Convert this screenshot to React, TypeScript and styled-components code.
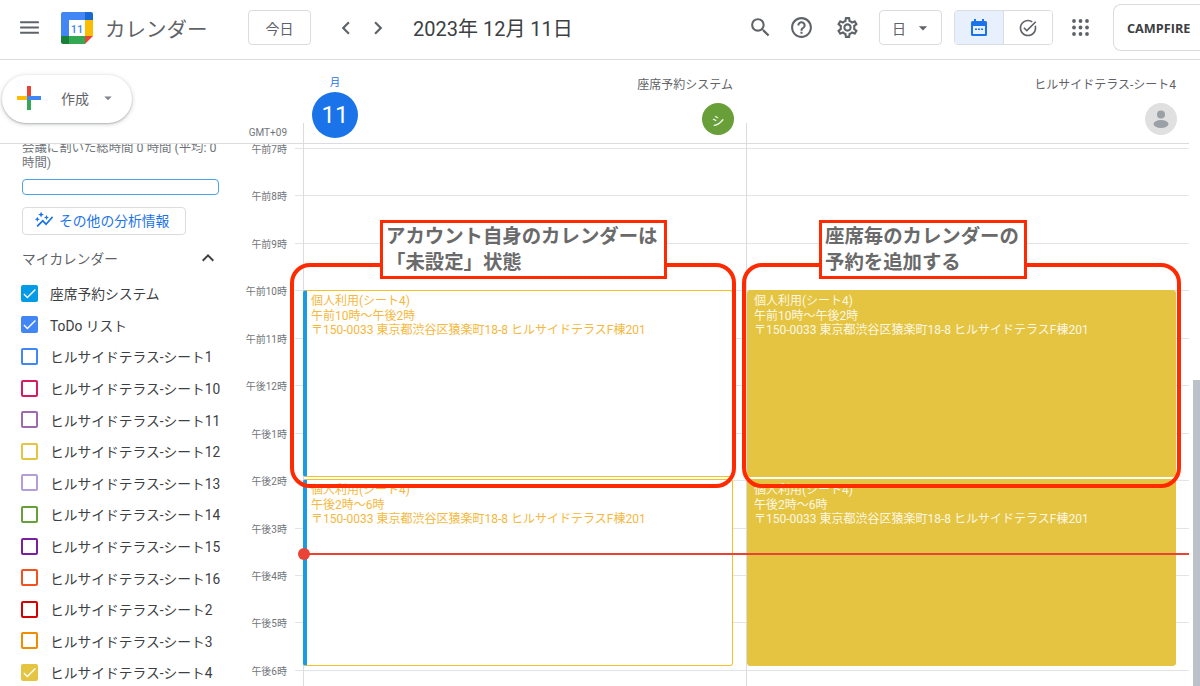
import React from "react";
import styled, { createGlobalStyle } from "styled-components";
import {
  MdArrowDropDown,
  MdAutoGraph,
  MdChevronLeft,
  MdChevronRight,
  MdCheck,
  MdHelpOutline,
  MdKeyboardArrowUp,
  MdMenu,
  MdOutlineSettings,
  MdOutlineTaskAlt,
  MdSearch,
} from "react-icons/md";

const HOUR = 47.45;

const GlobalStyle = createGlobalStyle`
  html, body {
    margin: 0;
    height: 100%;
    overflow: hidden;
    background: #fff;
    font-family: Roboto, "Noto Sans CJK JP", sans-serif;
    color: #3c4043;
  }
  * { box-sizing: border-box; }
`;

const Page = styled.div`
  position: relative;
  width: 1200px;
  height: 686px;
  overflow: hidden;
  display: flex;
  flex-direction: column;
`;

/* header */
const Header = styled.header`
  flex: none;
  height: 60px;
  padding-bottom: 4px;
  display: flex;
  align-items: center;
  border-bottom: 1px solid #dadce0;
  color: #5f6368;
`;

const MenuIcon = styled(MdMenu)`
  margin-left: 17px;
  font-size: 25px;
  flex: none;
`;

const LogoWrap = styled.div`
  margin-left: 19px;
  width: 32px;
  height: 32px;
  flex: none;
`;

const AppTitle = styled.div`
  margin-left: 12px;
  width: 143px;
  font-size: 20.5px;
  color: #5f6368;
  white-space: nowrap;
`;

const OutlineButton = styled.div<{ $width: number; $inset?: number }>`
  flex: none;
  width: ${(p) => p.$width}px;
  height: 35px;
  padding-left: ${(p) => p.$inset ?? 0}px;
  display: flex;
  align-items: center;
  justify-content: center;
  border: 1px solid #dadce0;
  border-radius: 4px;
  font-size: 14px;
  color: #5f6368;
`;

const NavArrows = styled.div`
  flex: none;
  margin-left: 22px;
  width: 58px;
  display: flex;
  justify-content: space-between;
  font-size: 26px;
  color: #5f6368;
`;

const DateText = styled.div`
  margin-left: 22px;
  font-size: 20px;
  color: #3c4043;
  white-space: nowrap;
`;

const Spacer = styled.div`
  flex: 1;
`;

const HeaderIcons = styled.div`
  flex: none;
  display: flex;
  align-items: center;
  gap: 16px;
  font-size: 25px;
  margin-right: 19px;
`;

const GearIcon = styled(MdOutlineSettings)`
  margin-left: 5px;
`;

const ViewCaret = styled(MdArrowDropDown)`
  font-size: 20px;
  margin-left: 7px;
`;

const Toggle = styled.div`
  flex: none;
  margin-left: 12px;
  width: 99px;
  height: 35px;
  display: flex;
  border: 1px solid #dadce0;
  border-radius: 4px;
  overflow: hidden;
`;

const ToggleSide = styled.div<{ $active?: boolean }>`
  flex: 1;
  display: flex;
  align-items: center;
  justify-content: center;
  font-size: 20px;
  background: ${(p) => (p.$active ? "#e8f0fe" : "#fff")};
  & + & {
    border-left: 1px solid #dadce0;
  }
`;

const AppsWrap = styled.div`
  flex: none;
  margin-left: 19px;
  width: 17px;
  height: 17px;
`;

const AccountBox = styled.div`
  flex: none;
  margin-left: 24px;
  width: 87px;
  height: 47px;
  padding-left: 13px;
  display: flex;
  align-items: center;
  border: 1px solid #dadce0;
  border-right: none;
  border-radius: 8px 0 0 8px;
  font-family: "Open Sans", sans-serif;
  font-size: 12.7px;
  font-weight: 700;
  color: #3c4043;
`;

/* body */
const Body = styled.div`
  flex: 1;
  min-height: 0;
  display: flex;
`;

const Sidebar = styled.aside`
  flex: none;
  width: 240px;
  display: flex;
  flex-direction: column;
`;

const CreateArea = styled.div`
  flex: none;
  height: 84px;
  padding: 15px 0 0 2px;
  border-bottom: 1px solid #dadce0;
  background: #fff;
  position: relative;
  z-index: 1;
`;

const CreateButton = styled.div`
  width: 130px;
  height: 48px;
  display: flex;
  align-items: center;
  padding: 0 0 2px 14px;
  border-radius: 24px;
  background: #fff;
  box-shadow: 0 1px 2px rgba(60, 64, 67, 0.3), 0 1px 4px 1px rgba(60, 64, 67, 0.15);
  font-size: 14px;
  color: #5f6368;
`;

const CreateLabel = styled.span`
  margin-left: 19px;
`;

const CreateCaret = styled(MdArrowDropDown)`
  margin-left: 10px;
  font-size: 18px;
  color: #80868b;
`;

const SideScroll = styled.div`
  flex: 1;
  min-height: 0;
  overflow: hidden;
  padding: 0 21px 0 22px;
`;

const MeetingText = styled.div`
  margin-top: -3px;
  font-size: 12.4px;
  line-height: 14.5px;
  color: #70757a;
`;

const Progress = styled.div`
  margin-top: 9px;
  height: 16px;
  border: 1px solid #4aa3ea;
  border-radius: 4px;
`;

const InsightButton = styled.div`
  margin-top: 12px;
  width: 164px;
  height: 28px;
  display: flex;
  align-items: center;
  padding: 0 0 2px 11px;
  gap: 5px;
  border: 1px solid #dadce0;
  border-radius: 4px;
  font-size: 13.8px;
  color: #1a73e8;
  white-space: nowrap;
`;

const InsightIcon = styled(MdAutoGraph)`
  font-size: 20px;
  flex: none;
`;

const SectionHead = styled.div`
  margin-top: 7px;
  height: 32px;
  display: flex;
  align-items: center;
  justify-content: space-between;
  font-size: 13.7px;
  color: #5f6368;
`;

const SectionCaret = styled(MdKeyboardArrowUp)`
  font-size: 24px;
  margin-right: -1px;
  color: #3c4043;
`;

const CalendarList = styled.ul`
  list-style: none;
  margin: 3.5px 0 0 -1px;
  padding: 0;
`;

const CalendarRow = styled.li`
  height: 31.6px;
  display: flex;
  align-items: center;
  gap: 12px;
  font-size: 13.75px;
  color: #3c4043;
  white-space: nowrap;
`;

const Check = styled.span<{ $color: string; $checked?: boolean }>`
  flex: none;
  width: 17px;
  height: 17px;
  display: flex;
  align-items: center;
  justify-content: center;
  border: 2px solid ${(p) => p.$color};
  border-radius: 2px;
  background: ${(p) => (p.$checked ? p.$color : "transparent")};
  color: #fff;
  font-size: 17px;
  overflow: hidden;
`;

const CheckMark = styled(MdCheck)`
  flex: none;
`;

/* main */
const Main = styled.main`
  flex: 1;
  min-width: 0;
  display: flex;
`;

const CalendarArea = styled.div`
  flex: 1;
  min-width: 0;
  display: flex;
  flex-direction: column;
`;

const DayHead = styled.div`
  flex: none;
  height: 84px;
  display: grid;
  grid-template-columns: 63px 443px 443px;
  border-bottom: 1px solid #dadce0;
`;

const GmtLabel = styled.div`
  align-self: end;
  padding: 0 16px 4px 0;
  text-align: right;
  font-size: 10px;
  line-height: 12px;
  color: #70757a;
`;

const HeadColumn = styled.div`
  position: relative;
  &::after {
    content: "";
    position: absolute;
    left: 0;
    bottom: 0;
    height: 20px;
    border-left: 1px solid #dadce0;
  }
`;

const DateBadge = styled.div`
  position: absolute;
  left: 9px;
  top: 16px;
  width: 46px;
  text-align: center;
  font-size: 10.5px;
  line-height: 13px;
  color: #1a73e8;
`;

const DayCircle = styled.div`
  margin-top: 3px;
  height: 46px;
  border-radius: 50%;
  background: #1a73e8;
  color: #fff;
  font-size: 24px;
  line-height: 46px;
`;

const CalName = styled.div`
  position: absolute;
  right: 13px;
  top: 18px;
  font-size: 12px;
  line-height: 15px;
  color: #5f6368;
  white-space: nowrap;
`;

const Avatar = styled.div<{ $bg: string }>`
  position: absolute;
  right: 12px;
  top: 43px;
  width: 32px;
  height: 32px;
  border-radius: 50%;
  background: ${(p) => p.$bg};
  color: #fff;
  font-size: 13px;
  display: flex;
  align-items: center;
  justify-content: center;
`;

const GridBody = styled.div`
  position: relative;
  flex: 1;
  min-height: 0;
  overflow: hidden;
  padding-top: 4px;
`;

const HourRow = styled.div`
  height: ${HOUR}px;
  display: flex;
`;

const HourLabel = styled.div`
  flex: none;
  width: 47px;
  margin-top: -5px;
  text-align: right;
  font-size: 10px;
  line-height: 13px;
  color: #70757a;
`;

const HourLine = styled.div`
  flex: 1;
  margin-left: 8px;
  border-top: 1px solid #e3e4e8;
`;

const Columns = styled.div`
  position: absolute;
  left: 63px;
  top: 0;
  bottom: 0;
  display: flex;
`;

const DayColumn = styled.div`
  position: relative;
  width: 443px;
  border-left: 1px solid #dadce0;
`;

const EventCard = styled.div<{ $filled?: boolean; $top: number; $height: number }>`
  position: absolute;
  left: ${(p) => (p.$filled ? 0 : -1)}px;
  top: ${(p) => p.$top}px;
  height: ${(p) => p.$height}px;
  width: ${(p) => (p.$filled ? 429 : 430)}px;
  padding: 3px 0 0 ${(p) => (p.$filled ? 6 : 4)}px;
  border-radius: 3px;
  border: 1px solid ${(p) => (p.$filled ? "#e4c441" : "#f6bf26")};
  ${(p) => (p.$filled ? "" : "border-left: 4px solid #1b9be3;")}
  background: ${(p) => (p.$filled ? "#e4c441" : "#fff")};
  color: ${(p) => (p.$filled ? "#fdf8e6" : "#f5b83d")};
  font-size: 12px;
  line-height: 14.6px;
  white-space: nowrap;
`;

const NowLine = styled.div`
  position: absolute;
  left: 63px;
  right: 0;
  top: 409px;
  height: 2px;
  background: #ea4335;
  &::before {
    content: "";
    position: absolute;
    left: -5px;
    top: -5px;
    width: 12px;
    height: 12px;
    border-radius: 50%;
    background: #ea4335;
  }
`;

const ScrollTrack = styled.div`
  flex: none;
  width: 11px;
  padding: 320px 0 0 4px;
`;

const ScrollThumb = styled.div`
  height: 306px;
  background: #bdc1c9;
`;

/* red annotations drawn over the screenshot */
const CalloutFrame = styled.div<{ $left: number; $width: number }>`
  position: absolute;
  left: ${(p) => p.$left}px;
  top: 263px;
  width: ${(p) => p.$width}px;
  height: 225px;
  border: 4px solid #ff2a00;
  border-radius: 20px;
`;

const CalloutLabel = styled.div<{ $left: number; $width: number }>`
  position: absolute;
  left: ${(p) => p.$left}px;
  top: 220px;
  width: ${(p) => p.$width}px;
  height: 59px;
  padding: 1px 0 0 3px;
  background: #fff;
  border: 3px solid #ff2a00;
  font-size: 19.4px;
  font-weight: 700;
  line-height: 26px;
  color: #6a6a6a;
  white-space: nowrap;
`;

const calendars = [
  { name: "座席予約システム", color: "#039be5", checked: true },
  { name: "ToDo リスト", color: "#4285f4", checked: true },
  { name: "ヒルサイドテラス-シート1", color: "#4285f4" },
  { name: "ヒルサイドテラス-シート10", color: "#d81b60" },
  { name: "ヒルサイドテラス-シート11", color: "#9e69af" },
  { name: "ヒルサイドテラス-シート12", color: "#e4c441" },
  { name: "ヒルサイドテラス-シート13", color: "#b39ddb" },
  { name: "ヒルサイドテラス-シート14", color: "#689f38" },
  { name: "ヒルサイドテラス-シート15", color: "#7b1fa2" },
  { name: "ヒルサイドテラス-シート16", color: "#f4511e" },
  { name: "ヒルサイドテラス-シート2", color: "#d50000" },
  { name: "ヒルサイドテラス-シート3", color: "#ef8c00" },
  { name: "ヒルサイドテラス-シート4", color: "#e4c441", checked: true },
];

const hours = [
  "午前7時",
  "午前8時",
  "午前9時",
  "午前10時",
  "午前11時",
  "午後12時",
  "午後1時",
  "午後2時",
  "午後3時",
  "午後4時",
  "午後5時",
  "午後6時",
];

const ADDRESS = "〒150-0033 東京都渋谷区猿楽町18-8 ヒルサイドテラスF棟201";

const events = [
  { time: "午前10時～午後2時", top: 146, height: 187 },
  { time: "午後2時～6時", top: 335, height: 187 },
];

const CalendarLogo = () => (
  <svg width="32" height="32" viewBox="0 0 32 32">
    <path d="M8 0h16v8H8z" fill="#4285f4" />
    <path d="M24 0h6a2 2 0 0 1 2 2v6h-8z" fill="#1967d2" />
    <path d="M24 8h8v16h-8z" fill="#fbbc04" />
    <path d="M8 24h16v8H8z" fill="#34a853" />
    <path d="M0 24h8v8H2a2 2 0 0 1-2-2z" fill="#188038" />
    <path d="M24 24h8l-8 8z" fill="#ea4335" />
    <path d="M2 0h6v24H0V2a2 2 0 0 1 2-2z" fill="#4285f4" />
    <rect x="8" y="8" width="16" height="16" fill="#fff" />
    <text x="16" y="21" textAnchor="middle" fontSize="11" fontWeight="500" fill="#4285f4" fontFamily="Roboto, sans-serif">
      11
    </text>
  </svg>
);

const PlusLogo = () => (
  <svg width="26" height="26" viewBox="0 0 26 26">
    <path d="M11 1h4v10h-4z" fill="#ea4335" />
    <path d="M15 11h10v4H15z" fill="#4285f4" />
    <path d="M11 15h4v10h-4z" fill="#34a853" />
    <path d="M1 11h10v4H1z" fill="#fbbc04" />
    <path d="M11 11h4v4h-4z" fill="#4285f4" />
  </svg>
);

const CalendarGlyph = () => (
  <svg width="20" height="20" viewBox="0 0 20 20" fill="#1a73e8">
    <path d="M5 1h2v2h6V1h2v2h1.5A1.5 1.5 0 0 1 18 4.500v12a1.5 1.5 0 0 1-1.500 1.500h-13A1.5 1.5 0 0 1 2 16.500v-12A1.500 1.500 0 0 1 3.500 3H5zM4 8v8h12V8z" />
    <path d="M6 10.500h2v1.500H6zM9 10.500h2v1.500H9zM12 10.500h2v1.500h-2z" />
  </svg>
);

const PersonGlyph = () => (
  <svg width="20" height="20" viewBox="0 0 20 20" fill="#9aa0a6">
    <circle cx="10" cy="5.500" r="4" />
    <ellipse cx="10" cy="15" rx="7.500" ry="4" />
  </svg>
);

const AppsGlyph = () => (
  <svg width="17" height="17" viewBox="0 0 17 17" fill="#5f6368">
    {[2, 8.5, 15].flatMap((y) =>
      [2, 8.5, 15].map((x) => <circle key={`${x}-${y}`} cx={x} cy={y} r="1.9" />)
    )}
  </svg>
);

export default function App() {
  return (
    <Page>
      <GlobalStyle />
      <Header>
        <MenuIcon />
        <LogoWrap>
          <CalendarLogo />
        </LogoWrap>
        <AppTitle>カレンダー</AppTitle>
        <OutlineButton $width={63}>今日</OutlineButton>
        <NavArrows>
          <MdChevronLeft />
          <MdChevronRight />
        </NavArrows>
        <DateText>2023年 12月 11日</DateText>
        <Spacer />
        <HeaderIcons>
          <MdSearch />
          <MdHelpOutline />
          <GearIcon />
        </HeaderIcons>
        <OutlineButton $width={63} $inset={4}>
          日
          <ViewCaret />
        </OutlineButton>
        <Toggle>
          <ToggleSide $active>
            <CalendarGlyph />
          </ToggleSide>
          <ToggleSide>
            <MdOutlineTaskAlt />
          </ToggleSide>
        </Toggle>
        <AppsWrap>
          <AppsGlyph />
        </AppsWrap>
        <AccountBox>CAMPFIRE</AccountBox>
      </Header>
      <Body>
        <Sidebar>
          <CreateArea>
            <CreateButton>
              <PlusLogo />
              <CreateLabel>作成</CreateLabel>
              <CreateCaret />
            </CreateButton>
          </CreateArea>
          <SideScroll>
            <MeetingText>会議に割いた総時間 0 時間 (平均: 0 時間)</MeetingText>
            <Progress />
            <InsightButton>
              <InsightIcon />
              その他の分析情報
            </InsightButton>
            <SectionHead>
              マイカレンダー
              <SectionCaret />
            </SectionHead>
            <CalendarList>
              {calendars.map((c) => (
                <CalendarRow key={c.name}>
                  <Check $color={c.color} $checked={c.checked}>
                    {c.checked && <CheckMark />}
                  </Check>
                  {c.name}
                </CalendarRow>
              ))}
            </CalendarList>
          </SideScroll>
        </Sidebar>
        <Main>
          <CalendarArea>
            <DayHead>
              <GmtLabel>GMT+09</GmtLabel>
              <HeadColumn>
                <DateBadge>
                  月<DayCircle>11</DayCircle>
                </DateBadge>
                <CalName>座席予約システム</CalName>
                <Avatar $bg="#689f38">シ</Avatar>
              </HeadColumn>
              <HeadColumn>
                <CalName>ヒルサイドテラス-シート4</CalName>
                <Avatar $bg="#e0e0e0">
                  <PersonGlyph />
                </Avatar>
              </HeadColumn>
            </DayHead>
            <GridBody>
              {hours.map((h) => (
                <HourRow key={h}>
                  <HourLabel>{h}</HourLabel>
                  <HourLine />
                </HourRow>
              ))}
              <Columns>
                <DayColumn>
                  {events.map((e) => (
                    <EventCard key={e.time} $top={e.top} $height={e.height}>
                      個人利用(シート4)
                      <br />
                      {e.time}
                      <br />
                      {ADDRESS}
                    </EventCard>
                  ))}
                </DayColumn>
                <DayColumn>
                  {events.map((e) => (
                    <EventCard key={e.time} $filled $top={e.top} $height={e.height}>
                      個人利用(シート4)
                      <br />
                      {e.time}
                      <br />
                      {ADDRESS}
                    </EventCard>
                  ))}
                </DayColumn>
              </Columns>
              <NowLine />
            </GridBody>
          </CalendarArea>
          <ScrollTrack>
            <ScrollThumb />
          </ScrollTrack>
        </Main>
      </Body>
      <CalloutFrame $left={289.5} $width={446} />
      <CalloutFrame $left={742} $width={439} />
      <CalloutLabel $left={380} $width={287}>
        アカウント自身のカレンダーは
        <br />
        「未設定」状態
      </CalloutLabel>
      <CalloutLabel $left={819} $width={208}>
        座席毎のカレンダーの
        <br />
        予約を追加する
      </CalloutLabel>
    </Page>
  );
}
